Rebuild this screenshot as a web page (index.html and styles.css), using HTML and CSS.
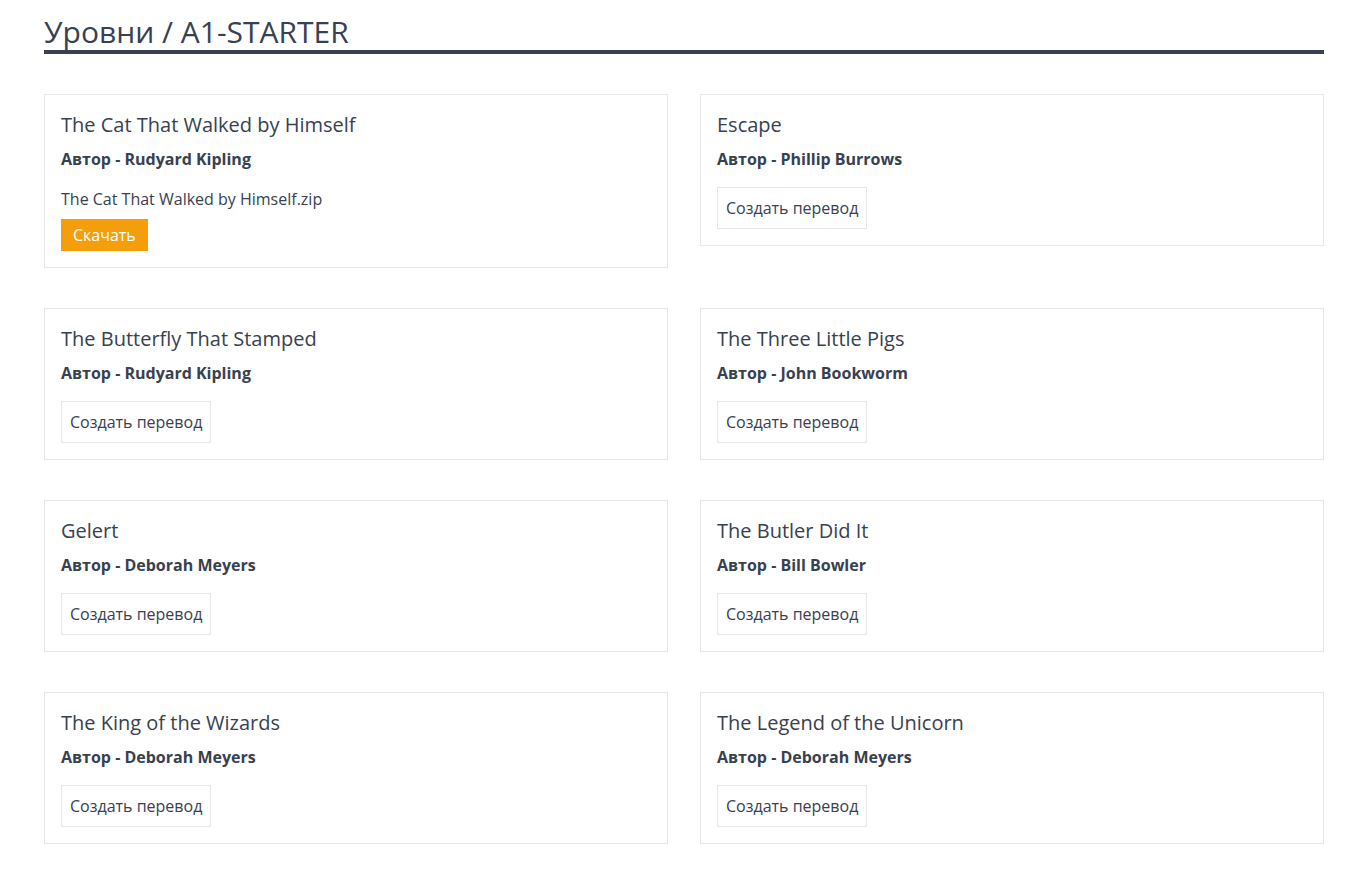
FILE: index.html
```html
<!DOCTYPE html>
<html lang="ru">
<head>
<meta charset="utf-8">
<title>Уровни / A1-STARTER</title>
<link rel="stylesheet" href="styles.css">
</head>
<body>
<div class="page">
  <h1 class="heading">Уровни / A1-STARTER</h1>
  <div class="grid">
    <div class="card">
      <h2 class="title">The Cat That Walked by Himself</h2>
      <p class="author">Автор - Rudyard Kipling</p>
      <p class="file">The Cat That Walked by Himself.zip</p>
      <a class="btn-download" href="#">Скачать</a>
    </div>
    <div class="card">
      <h2 class="title">Escape</h2>
      <p class="author">Автор - Phillip Burrows</p>
      <a class="btn-create" href="#">Создать перевод</a>
    </div>
    <div class="card">
      <h2 class="title">The Butterfly That Stamped</h2>
      <p class="author">Автор - Rudyard Kipling</p>
      <a class="btn-create" href="#">Создать перевод</a>
    </div>
    <div class="card">
      <h2 class="title">The Three Little Pigs</h2>
      <p class="author">Автор - John Bookworm</p>
      <a class="btn-create" href="#">Создать перевод</a>
    </div>
    <div class="card">
      <h2 class="title">Gelert</h2>
      <p class="author">Автор - Deborah Meyers</p>
      <a class="btn-create" href="#">Создать перевод</a>
    </div>
    <div class="card">
      <h2 class="title">The Butler Did It</h2>
      <p class="author">Автор - Bill Bowler</p>
      <a class="btn-create" href="#">Создать перевод</a>
    </div>
    <div class="card">
      <h2 class="title">The King of the Wizards</h2>
      <p class="author">Автор - Deborah Meyers</p>
      <a class="btn-create" href="#">Создать перевод</a>
    </div>
    <div class="card">
      <h2 class="title">The Legend of the Unicorn</h2>
      <p class="author">Автор - Deborah Meyers</p>
      <a class="btn-create" href="#">Создать перевод</a>
    </div>
  </div>
</div>
</body>
</html>
```
FILE: styles.css
```css
* { box-sizing: border-box; }
html, body { margin: 0; padding: 0; background: #fff; }
body {
  font-family: "Open Sans", "Noto Sans", sans-serif;
  color: #374151;
}
.page {
  width: 1280px;
  margin-left: 44px;
  padding-top: 14px;
}
.heading {
  margin: 0;
  font-size: 30px;
  line-height: 36px;
  font-weight: 400;
  border-bottom: 4px solid #374151;
}
.grid {
  margin-top: 40px;
  display: grid;
  grid-template-columns: 1fr 1fr;
  column-gap: 32px;
  row-gap: 40px;
  align-items: start;
}
.card {
  border: 1px solid #e5e7eb;
  padding: 16px;
  display: flex;
  flex-direction: column;
  align-items: flex-start;
}
.title {
  margin: 0 0 8px;
  font-size: 20px;
  line-height: 28px;
  font-weight: 400;
}
.author {
  margin: 0;
  font-size: 16px;
  line-height: 24px;
  font-weight: 700;
}
.file {
  margin: 16px 0 8px;
  font-size: 16px;
  line-height: 24px;
}
.btn-download {
  display: inline-block;
  background: #f59e0b;
  color: #fff;
  text-decoration: none;
  font-size: 16px;
  line-height: 24px;
  padding: 4px 12px;
}
.btn-create {
  display: inline-block;
  margin-top: 16px;
  border: 1px solid #e5e7eb;
  color: #374151;
  text-decoration: none;
  font-size: 16px;
  line-height: 24px;
  padding: 8px 8px;
}
```
